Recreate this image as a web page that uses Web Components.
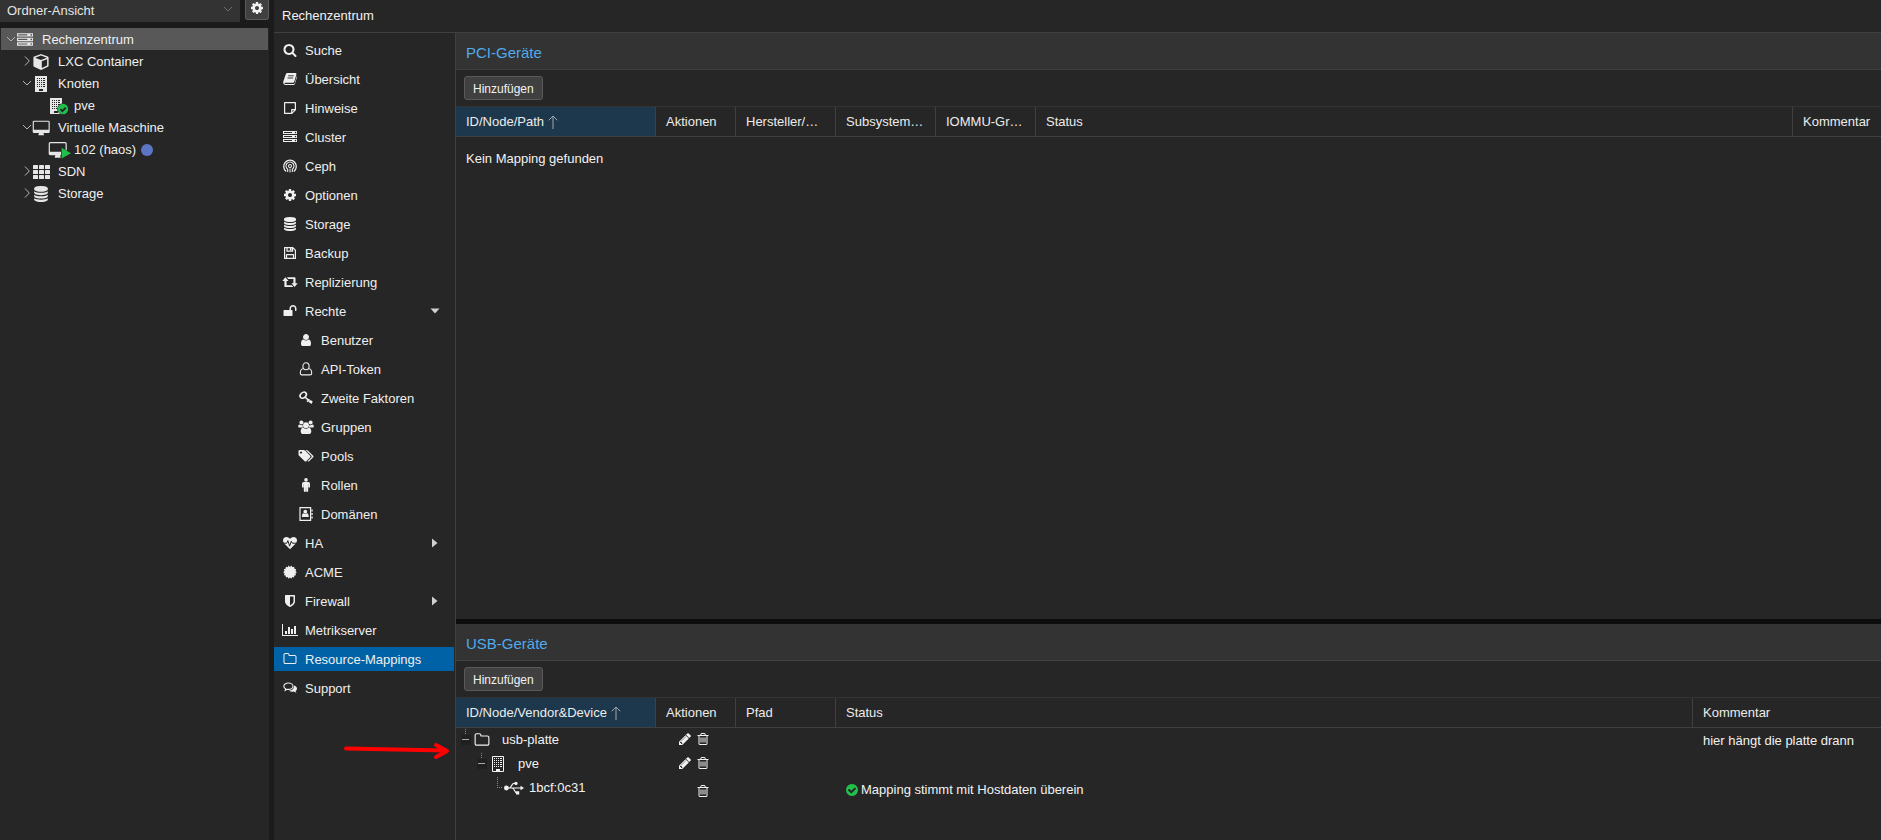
<!DOCTYPE html>
<html lang="de">
<head>
<meta charset="utf-8">
<title>Rechenzentrum</title>
<style>
html, body { margin: 0; height: 100%; background: #262626; }
body { color: #f2f2f2; font: 13px/16px "Liberation Sans", Arial, sans-serif; overflow: hidden; }
</style>
</head>
<body>
<dc-app></dc-app>
<script>
const P = d => `<path d="${d}"/>`;
/* Icons: [viewBox, markup] */
const BUILDING = `<path fill-rule="evenodd" d="M1 0h12v16H1zM3 2v1h1V2zm2 0v1h1V2zm2 0v1h1V2zm2 0v1h1V2zM3 4v1h1V4zm2 0v1h1V4zm2 0v1h1V4zm2 0v1h1V4zM3 6v1h1V6zm2 0v1h1V6zm2 0v1h1V6zm2 0v1h1V6zM3 8v1h1V8zm2 0v1h1V8zm2 0v1h1V8zm2 0v1h1V8zM3 10v1h1v-1zm2 0v1h1v-1zm2 0v1h1v-1zm2 0v1h1v-1zM11 2v1h-1V2zM11 4v1h-1V4zM11 6v1h-1V6zM11 8v1h-1V8zM11 10v1h-1v-1zM5 13v2h4v-2z"/>`;
const DESKTOP = P("M1728 992v-832q0-13-9.5-22.5t-22.5-9.5h-1600q-13 0-22.5 9.5t-9.5 22.5v832q0 13 9.5 22.5t22.5 9.5h1600q13 0 22.5-9.5t9.5-22.5zm128-832v1088q0 66-47 113t-113 47h-544q0 37 16 77.5t32 71 16 43.5q0 26-19 45t-45 19h-512q-26 0-45-19t-19-45q0-14 16-44t32-70 16-78h-544q-66 0-113-47t-47-113v-1088q0-66 47-113t113-47h1600q66 0 113 47t47 113z");
const ICONS = {
search: ["0 0 1792 1792", P("M1216 832q0-185-131.5-316.5t-316.5-131.5-316.5 131.5-131.5 316.5 131.5 316.5 316.5 131.5 316.5-131.5 131.5-316.5zm512 832q0 52-38 90t-90 38q-54 0-90-38l-343-342q-179 124-399 124-143 0-273.5-55.5t-225-150-150-225-55.5-273.5 55.5-273.5 150-225 225-150 273.5-55.5 273.5 55.5 225 150 150 225 55.5 273.5q0 220-124 399l343 343q37 37 37 90z")],
cog: ["0 0 1792 1792", P("M1152 896q0-106-75-181t-181-75-181 75-75 181 75 181 181 75 181-75 75-181zm512-109v222q0 12-8 23t-20 13l-185 28q-19 54-39 91 35 50 107 138 10 12 10 25t-9 23q-27 37-99 108t-94 71q-12 0-26-9l-138-108q-44 23-91 38-16 136-29 186-7 28-36 28h-222q-14 0-24.5-8.5t-11.5-21.5l-28-184q-49-16-90-37l-141 107q-10 9-25 9-14 0-25-11-126-114-165-168-7-10-7-23 0-12 8-23 15-21 51-66.5t54-70.5q-27-50-41-99l-183-27q-13-2-21-12.5t-8-23.5v-222q0-12 8-23t19-13l186-28q14-46 39-92-40-57-107-138-10-12-10-24 0-10 9-23 26-36 98.5-107.5t94.5-71.5q13 0 26 10l138 107q44-23 91-38 16-136 29-186 7-28 36-28h222q14 0 24.5 8.5t11.5 21.5l28 184q49 16 90 37l142-107q9-9 24-9 13 0 25 10 129 119 165 170 7 8 7 22 0 12-8 23-15 21-51 66.5t-54 70.5q26 50 41 98l183 28q13 2 21 12.5t8 23.5z")],
database: ["0 0 1792 1792", P("M896 768q237 0 443-43t325-127v170q0 69-103 128t-280 93.5-385 34.5-385-34.5-280-93.5-103-128v-170q119 84 325 127t443 43zm0 768q237 0 443-43t325-127v170q0 69-103 128t-280 93.5-385 34.5-385-34.5-280-93.5-103-128v-170q119 84 325 127t443 43zm0-384q237 0 443-43t325-127v170q0 69-103 128t-280 93.5-385 34.5-385-34.5-280-93.5-103-128v-170q119 84 325 127t443 43zm0-1152q208 0 385 34.5t280 93.5 103 128v128q0 69-103 128t-280 93.5-385 34.5-385-34.5-280-93.5-103-128v-128q0-69 103-128t280-93.5 385-34.5z")],
server: ["0 0 1792 1792", P("M128 1408h1024v-128h-1024v128zm0-512h1024v-128h-1024v128zm1568 448q0-40-28-68t-68-28-68 28-28 68 28 68 68 28 68-28 28-68zm-1568-960h1024v-128h-1024v128zm1568 448q0-40-28-68t-68-28-68 28-28 68 28 68 68 28 68-28 28-68zm0-512q0-40-28-68t-68-28-68 28-28 68 28 68 68 28 68-28 28-68zm96 832v384h-1792v-384h1792zm0-512v384h-1792v-384h1792zm0-512v384h-1792v-384h1792z")],
pencil: ["128 128 1536 1536", P("M491 1536l91-91-235-235-91 91v107h128v128h107zm523-928q0-22-22-22-10 0-17 7l-542 542q-7 7-7 17 0 22 22 22 10 0 17-7l542-542q7-7 7-17zm-54-192l416 416-832 832h-416v-416zm683 96q0 53-37 90l-166 166-416-416 166-165q36-38 90-38 53 0 91 38l235 234q37 39 37 91z")],
trash: ["0 0 1792 1792", P("M704 736v576q0 14-9 23t-23 9h-64q-14 0-23-9t-9-23v-576q0-14 9-23t23-9h64q14 0 23 9t9 23zm256 0v576q0 14-9 23t-23 9h-64q-14 0-23-9t-9-23v-576q0-14 9-23t23-9h64q14 0 23 9t9 23zm256 0v576q0 14-9 23t-23 9h-64q-14 0-23-9t-9-23v-576q0-14 9-23t23-9h64q14 0 23 9t9 23zm128 724v-948h-896v948q0 22 7 40.5t14.5 27 10.5 8.5h832q3 0 10.5-8.5t14.5-27 7-40.5zm-672-1076h448l-48-117q-7-9-17-11h-317q-10 2-17 11zm928 32v64q0 14-9 23t-23 9h-96v948q0 83-47 143.5t-113 60.5h-832q-66 0-113-58.5t-47-141.5v-952h-96q-14 0-23-9t-9-23v-64q0-14 9-23t23-9h309l70-167q15-37 54-63t79-26h320q40 0 79 26t54 63l70 167h309q14 0 23 9t9 23z")],
check: ["128 128 1536 1536", P("M1412 734q0-28-18-46l-91-90q-19-19-45-19t-45 19l-408 407-226-226q-19-19-45-19t-45 19l-91 90q-18 18-18 46 0 27 18 45l362 362q19 19 45 19 27 0 46-19l543-543q18-18 18-45zm252 162q0 209-103 385.5t-279.5 279.5-385.5 103-385.5-103-279.5-279.5-103-385.5 103-385.5 279.5-279.5 385.5-103 385.5 103 279.5 279.5 103 385.5z")],
user: ["0 0 1792 1792", P("M1536 1399q0 109-62.5 187t-150.5 78h-854q-88 0-150.5-78t-62.5-187q0-85 8.5-160.5t31.5-152 58.5-131 94-89 134.5-34.5q131 128 313 128t313-128q76 0 134.5 34.5t94 89 58.5 131 31.5 152 8.5 160.5zm-256-887q0 159-112.5 271.5t-271.5 112.5-271.5-112.5-112.5-271.5 112.5-271.5 271.5-112.5 271.5 112.5 112.5 271.5z")],
folder: ["0 0 1792 1792", P("M1600 1312v-704q0-40-28-68t-68-28h-704q-40 0-68-28t-28-68v-64q0-40-28-68t-68-28h-320q-40 0-68 28t-28 68v960q0 40 28 68t68 28h1216q40 0 68-28t28-68zm128-704v704q0 92-66 158t-158 66h-1216q-92 0-158-66t-66-158v-960q0-92 66-158t158-66h320q92 0 158 66t66 158v32h672q92 0 158 66t66 158z")],
unlock: ["0 0 1792 1792", P("M1728 576v256q0 26-19 45t-45 19h-64q-26 0-45-19t-19-45v-256q0-106-75-181t-181-75-181 75-75 181v192h96q40 0 68 28t28 68v576q0 40-28 68t-68 28h-960q-40 0-68-28t-28-68v-576q0-40 28-68t68-28h672v-192q0-185 131.5-316.5t316.5-131.5 316.5 131.5 131.5 316.5z")],
shield: ["0 0 1792 1792", P("M1344 960v-640h-448v1137q119-63 213-137 235-184 235-360zm192-768v768q0 86-33.5 170.5t-83 150-118 127.5-126.5 103-121 77.5-89.5 49.5-42.5 20q-12 6-26 6t-26-6q-16-7-42.5-20t-89.5-49.5-121-77.5-126.5-103-118-127.5-83-150-33.5-170.5v-768q0-26 19-45t45-19h1152q26 0 45 19t19 45z")],
cube: ["0 0 16 16", `<path fill-rule="evenodd" d="M7.5 0.2Q8 0 8.5.2L14.9 2.6Q15.6 2.9 15.6 3.7V11.7Q15.6 12.4 15 12.7L8.6 15.8Q8 16.1 7.4 15.8L1 12.7Q.4 12.4.4 11.7V3.7Q.4 2.9 1.1 2.6ZM8 1.6 2.1 3.7 8 5.9 13.9 3.7ZM8.8 14 14.1 11.4V5.2L8.8 7.2Z"/>`],
building: ["0 0 14 16", BUILDING],
node: ["0 0 20 18", BUILDING + `<circle cx="14" cy="11" r="5.8" fill="#262626"/><circle cx="14" cy="11" r="5.2" fill="#21bf4b"/><path d="m11.4 11.2 2 2 3.4-3.6" fill="none" stroke="#262626" stroke-width="1.8"/>`],
buildingo: ["0 0 14 16", `<path fill="none" stroke="currentColor" d="M1.5.5h11v15h-11z"/><path d="M3 2h1v1H3zm2 0h1v1H5zm2 0h1v1H7zm2 0h2v1H9zM3 4h1v1H3zm2 0h1v1H5zm2 0h1v1H7zm2 0h2v1H9zM3 6h1v1H3zm2 0h1v1H5zm2 0h1v1H7zm2 0h2v1H9zM3 8h1v1H3zm2 0h1v1H5zm2 0h1v1H7zm2 0h2v1H9zM3 10h1v1H3zm2 0h1v1H5zm2 0h1v1H7zm2 0h2v1H9zM5 13h4v2.5H5z"/>`],
desktop: ["-32 0 1920 1664", DESKTOP],
vm: ["0 0 22 17", `<g transform="translate(.3 0) scale(.0094)">${DESKTOP}</g><path d="M12 5l10 6.200L12 17z" fill="#262626"/><path d="M12.600 5.800 22 11.200 12.600 16.600z" fill="#21bf4b"/>`],
th: ["0 0 17 14", [0, 5, 10].map(y => [0, 6, 12].map(x => `<rect x="${x}" y="${y}" width="5" height="4" rx=".6"/>`).join("")).join("")],
book: ["0 0 14 14", `<path d="M4.500 1H12.600Q13.700 1.300 13.400 2.400L11.200 9.800Q10.900 10.700 10 10.700H2.200Q1.400 10.900 1.600 11.500 1.800 12 2.600 12H10.800Q11.500 12 11.700 11.300L13.800 4.100Q14.200 4.700 13.900 5.500L11.900 12Q11.500 13 10.600 13H2.500Q.7 12.900.3 11.200 0 10.300.4 9.300L2.800 2.300Q3.300 1 4.500 1z"/><path d="M5.200 3.800h5.600M4.500 6h5.600" stroke="#262626" stroke-width=".9"/>`],
note: ["0 0 14 14", `<path d="M1.600 1.600h10.800v7.200l-3.600 3.600H1.600zM12.400 8.700H8.700v3.700" fill="none" stroke="currentColor" stroke-width="1.200" stroke-linejoin="round"/>`],
ceph: ["0 0 14 14", `<g fill="none" stroke="currentColor" stroke-width="1.300"><path d="M3.200 12.500A6.300 6.300 0 1 1 10.800 12.500"/><path d="M4.700 13V10.300A4 4 0 1 1 9.300 10.300V13" stroke-width="1.100"/><circle cx="7" cy="7" r="1.500" stroke-width="1.100"/><path d="M7 9.500v4" stroke-width="1"/></g>`],
floppy: ["0 0 14 14", `<path d="M1.600 1.600h8.200l2.600 2.600v8.200H1.600z M3.500 12.400V8.600h7v3.800M4 1.600v3.600h5.600V1.600" fill="none" stroke="currentColor" stroke-width="1.200" stroke-linejoin="round"/><path d="M6.900 2h1.700v2.600H6.900z"/>`],
retweet: ["0 0 16 14", P("M3.400 2.200 6.500 6H4.600v4.200h5.200l1.500 1.900H3.300Q2.400 12.100 2.400 11.200V6H.3zM4.800 2.200h7.800q.9 0 .9.9V8.200h2.200L12.600 12 9.400 8.200h2V4.100H6.300z")],
usero: ["0 0 14 14", `<path d="M4 6.800C2 7 1.300 8.700 1.300 11.200q0 1.700 1.700 1.700h8q1.700 0 1.700-1.700C12.700 8.700 12 7 10 6.800" fill="none" stroke="currentColor" stroke-width="1.100"/><ellipse cx="7" cy="4.300" rx="3.100" ry="3.500" fill="none" stroke="currentColor" stroke-width="1.100"/>`],
key: ["0 0 14 14", `<ellipse cx="4.200" cy="4.200" rx="3.500" ry="2.600" transform="rotate(-42 4.200 4.200)" fill="none" stroke="currentColor" stroke-width="1.600"/><path d="m6 6 6.800 6.300M8 10.700l2.400-2.400M10.300 11.400l1.400-1.400M11.300 9.600l2 1.800" fill="none" stroke="currentColor" stroke-width="1.600"/>`],
users: ["0 0 16 14", `<circle cx="3.400" cy="2.500" r="2"/><circle cx="12.600" cy="2.500" r="2"/><path d="M1.300 4.500Q3 5.600 4.700 4.900 4.500 6.600 5.500 7.600H1.800Q.2 7.600.2 6.400.2 4.500 1.300 4.500zM14.700 4.500Q13 5.600 11.300 4.900 11.500 6.600 10.500 7.600h3.700q1.600 0 1.600-1.200Q15.800 4.500 14.700 4.500z"/><circle cx="8" cy="5.200" r="2.900"/><path d="M5.300 7.800Q8 9.800 10.700 7.800 13.300 8 13.300 11.800 13.200 13.800 11.600 13.900H4.400Q2.800 13.800 2.700 11.800 2.700 8 5.300 7.800z"/>`],
tags: ["0 0 16 14", `<path fill-rule="evenodd" d="M.5 2Q.5 1 1.500 1H5.600Q6.600 1.100 7.300 1.800L12.200 6.700Q12.900 7.400 12.200 8.200L8.300 12.200Q7.500 12.900 6.700 12.200L1.600 7.200Q.6 6.300.5 5.400zM3 2.400a1.100 1.100 0 1 0 .01 0z"/><path d="M7.500 1h.9q.9.100 1.700.8L15.200 6.700q.7.700 0 1.500L11.100 12.300Q10.400 12.800 9.500 12.300L13.400 8.300Q14 7.500 13.400 6.700z"/>`],
male: ["0 0 14 14", `<circle cx="7" cy="1.900" r="1.800"/><path d="M4.700 4h4.600Q11 4.200 11 5.800V9q-.2.700-.8.700T9.400 9V6.200H9.200V13q-.3.900-1.100.9T7.100 13V9.400H6.900V13q-.2.900-1 .9T4.800 13V6.200H4.600V9q-.2.700-.8.700T3 9V5.800Q3 4.200 4.700 4z"/>`],
address: ["0 0 14 14", `<path d="M1 .7h10.600v12.600H1z" fill="none" stroke="currentColor" stroke-width="1.200"/><circle cx="6.300" cy="4.700" r="1.900"/><path d="M4.600 6.200Q6.300 7.400 8 6.200q1.700.2 1.700 3.800H2.900Q2.900 6.400 4.600 6.200zM12.400 2.500h1.300v2h-1.300zM12.400 6h1.300v2h-1.300zM12.400 9.500h1.300v2h-1.300z"/>`],
heartbeat: ["0 0 14 14", `<path d="M7 13.200 1.300 7.400Q0 5.900 0 4.500 0 1.100 3.700 1 5.300 1 7 2.800 8.700 1 10.300 1 14 1.100 14 4.500 14 5.900 12.700 7.400z"/><path d="M0 7.200h3.800l1.100-2.600 1.700 5.600 1.700-5 1 2H14" fill="none" stroke="#262626" stroke-width="1"/>`],
cert: ["0 0 14 14", P("M7 1.900 8.500.6 9.400 2.300 11.200 1.800 11.400 3.700 13.200 4.200 12.500 5.900 13.800 7.200 12.400 8.500 13.100 10.200 11.300 10.500 11 12.400 9.300 12 8.300 13.700 7 12.500 5.600 13.700 4.700 12 2.900 12.400 2.700 10.600.9 10.200 1.600 8.500.2 7.200 1.600 5.900.8 4.200 2.600 3.700 2.900 1.800 4.700 2.300 5.600.6z")],
chart: ["0 0 16 14", P("M0 1h1v11h15v1H0zM3 8h2v3H3zM6 4h2v7H6zM9 6h2v5H9zM12 3h2v8h-2z")],
comments: ["0 0 14 14", `<path d="M5.400 2C2.900 2 .8 3.400.8 5.200c0 1.100.8 2 1.900 2.600L2.200 9.300 4.200 8.300q.6.100 1.200.1C7.900 8.400 10 7 10 5.200S7.900 2 5.400 2z" fill="none" stroke="currentColor" stroke-width="1.100"/><path d="M11 4.600c1.800.5 3 1.700 3 3.100q0 1.400-1.400 2.400.2.900 1 1.700-1.600-.1-2.800-1.200-2.800.6-5-.8Q11.200 9.600 11 4.600z"/>`],
usb: ["0 0 20 14", `<circle cx="2.400" cy="7" r="2.400"/><path d="M2 7h15M5 7C8 7 7 2.400 10 2.400h2M8 7c3 0 2 4.800 5 4.800" fill="none" stroke="currentColor" stroke-width="1.200"/><circle cx="12" cy="2.400" r="1.600"/><path d="M12 10.200h3.200v3.200H12zM16.500 4.800 20 7l-3.500 2.200z"/>`],
down: ["0 0 10 10", `<path d="m1 3 4 4 4-4" fill="none" stroke="currentColor" stroke-width="1"/>`],
right: ["0 0 10 10", `<path d="m3 .5 4.300 4.500L3 9.500" fill="none" stroke="currentColor" stroke-width="1"/>`],
caretdown: ["0 0 10 10", P("M.5 2.500h9L5 7.500z")],
caretright: ["0 0 10 10", P("M2 .5v9L7.500 5z")],
sort: ["0 0 10 14", `<path d="M5 14V1M.7 5.300 5 1l4.300 4.300" fill="none" stroke="currentColor" stroke-width="1"/>`],
minus: ["0 0 16 24", `<path d="M7.500 1v6" stroke="#8a8a8a" stroke-dasharray="1 1" fill="none"/><path fill="#1f1f1f" d="M3 7h10v10H3z"/><path fill="#a8a8a8" d="M4 11h7v1H4z"/>`],
elbow: ["0 0 14 24", `<path d="M7.500 1v11M7 11.500h6" stroke="#8a8a8a" stroke-dasharray="1 1" fill="none"/>`]
};

/* Defines a custom element whose open shadow root holds the given styles and markup. */
function define(name, css, html) {
  customElements.define(name, class extends HTMLElement {
    constructor() {
      super();
      const markup = typeof html === "function" ? html(this) : html;
      const t = document.createElement("template");
      t.innerHTML = `<style>${css}</style>${markup}`;
      this.attachShadow({ mode: "open" }).append(t.content.cloneNode(true));
    }
  });
}

define("dc-icon", `:host{display:block;flex:none;width:14px;height:14px}svg{display:block;width:100%;height:100%;overflow:visible}`,
  el => { const i = ICONS[el.getAttribute("name")]; return `<svg viewBox="${i[0]}" fill="currentColor" aria-hidden="true">${i[1]}</svg>`; });

define("view-bar", `
  :host{display:grid;grid-template-columns:1fr 24px;gap:5px;height:28px;background:#1b1b1b;align-items:start}
  label{display:flex;align-items:center;height:22px;background:#333;padding-right:7px;color:#6e6e6e}
  select{appearance:none;flex:1;min-width:0;height:22px;margin:0;border:0;padding:0 0 1px 7px;background:none;color:#e4e4e4;font:inherit;outline:0}
  label dc-icon{width:10px;height:10px;margin-bottom:4px}
  button{height:20px;padding:0 0 4px;border:1px solid #5c5c5c;border-top:0;border-radius:0 0 3px 3px;background:#404040;color:#f2f2f2;display:flex;align-items:center;justify-content:center}
  button dc-icon{width:14px;height:14px}`,
  `<label><select aria-label="Ansicht"><option>Ordner-Ansicht</option></select><dc-icon name="down"></dc-icon></label>
   <button type="button" aria-label="Einstellungen"><dc-icon name="cog"></dc-icon></button>`);

define("tree-node", `
  :host{display:flex;align-items:center;height:22px;margin:0 1px;padding-left:calc(var(--depth,0)*16px);white-space:nowrap;color:#efefef}
  :host([selected]){background:#585858}
  .x{width:16px;display:flex;justify-content:flex-end;color:#b5b5b5}
  .x dc-icon{width:10px;height:10px;margin-right:1px}
  .i{width:16px;height:16px;display:flex;align-items:center;margin:2px 9px 0 0;color:#e6e6e6}
  .i dc-icon{width:16px;height:16px}
  .i dc-icon[name=th],.i dc-icon[name=desktop]{width:17px}
  .i dc-icon[name=node]{width:20px;height:18px;margin-top:2px}
  .i dc-icon[name=vm]{width:22px;height:17px}
  .t{display:flex;align-items:center;padding-top:2px}`,
  el => { const a = el.getAttribute("arrow"), n = el.getAttribute("icon");
    return `<span class="x">${a ? `<dc-icon name="${a}"></dc-icon>` : ""}</span><span class="i"><dc-icon name="${n}"></dc-icon></span><span class="t"><slot></slot></span>`; });

define("resource-tree", `
  :host{display:block;padding-bottom:8px}
  .tag{width:12px;height:12px;border-radius:50%;background:#5c76c4;margin-left:5px}
  .d1{--depth:1}.d2{--depth:2}`,
  `<tree-node role="treeitem" selected arrow="down" icon="server">Rechenzentrum</tree-node>
   <tree-node role="treeitem" class="d1" arrow="right" icon="cube">LXC Container</tree-node>
   <tree-node role="treeitem" class="d1" arrow="down" icon="building">Knoten</tree-node>
   <tree-node role="treeitem" class="d2" icon="node">pve</tree-node>
   <tree-node role="treeitem" class="d1" arrow="down" icon="desktop">Virtuelle Maschine</tree-node>
   <tree-node role="treeitem" class="d2" icon="vm">102 (haos)<span class="tag"></span></tree-node>
   <tree-node role="treeitem" class="d1" arrow="right" icon="th">SDN</tree-node>
   <tree-node role="treeitem" class="d1" arrow="right" icon="database">Storage</tree-node>`);

define("nav-item", `
  :host{display:block}
  a{display:flex;align-items:center;height:24px;padding:0 14px 0 8px;color:#efefef;text-decoration:none}
  :host([sub]) a{padding-left:24px}
  :host([active]) a{background:#0062a6}
  .i{width:16px;height:16px;margin-right:7px;display:flex;justify-content:center}
  .i dc-icon{margin-top:1px}
  .t{flex:1;padding-top:2px}
  dc-icon[name=users],dc-icon[name=tags],dc-icon[name=retweet],dc-icon[name=chart]{width:16px}
  .c{width:10px;height:10px;color:#d0d0d0}`,
  el => { const c = el.getAttribute("arrow");
    return `<a href="#"><span class="i"><dc-icon name="${el.getAttribute("icon")}"></dc-icon></span><span class="t"><slot></slot></span>${c ? `<dc-icon class="c" name="${c}"></dc-icon>` : ""}</a>`; });

const NAV = [["search","Suche"],["book","Übersicht"],["note","Hinweise"],["server","Cluster"],["ceph","Ceph"],["cog","Optionen"],["database","Storage"],["floppy","Backup"],["retweet","Replizierung"],["unlock","Rechte",'arrow="caretdown"'],
["user","Benutzer","sub"],["usero","API-Token","sub"],["key","Zweite Faktoren","sub"],["users","Gruppen","sub"],["tags","Pools","sub"],["male","Rollen","sub"],["address","Domänen","sub"],
["heartbeat","HA",'arrow="caretright"'],["cert","ACME"],["shield","Firewall",'arrow="caretright"'],["chart","Metrikserver"],["folder","Resource-Mappings","active"],["comments","Support"]];
define("side-nav", `:host{display:block;border-right:1px solid #404040;padding:5px 1px 0 0}nav{display:grid;gap:5px}`,
  `<nav aria-label="Rechenzentrum">${NAV.map(n => `<nav-item icon="${n[0]}" ${n[2] || ""}>${n[1]}</nav-item>`).join("")}</nav>`);

define("mapping-panel", `
  :host{display:flex;flex-direction:column;min-width:0}
  h2{margin:0;height:36px;line-height:40px;padding-left:10px;background:#333;border-bottom:1px solid #404040;color:#4fabec;font-size:15px;font-weight:400}
  .bar{height:36px;display:flex;align-items:center;padding-left:8px;border-bottom:1px solid #333}
  button{height:24px;padding:1px 8px 0;border:1px solid #5a5a5a;border-radius:3px;background:#404040;color:#f2f2f2;font:inherit;font-size:12px}`,
  `<h2><slot name="title"></slot></h2><div class="bar"><button type="button">Hinzufügen</button></div><slot></slot>`);

const GRID = `
  :host{display:block}
  table{width:100%;table-layout:fixed;border-collapse:separate;border-spacing:0}
  th,td{box-sizing:border-box;white-space:nowrap}
  th{height:30px;padding:0 0 0 10px;border-bottom:1px solid #404040;border-right:1px solid #404040;text-align:left;font-weight:400;color:#ececec}
  th:last-child{border-right:0}
  th.s{background:#1d384d}
  th.s span{display:flex;align-items:center;gap:4px}
  th.s dc-icon{width:10px;color:#a0a8ae}
  td{padding:0 0 0 10px}`;
define("pci-grid", GRID + `td{height:44px}.w200{width:200px}.w80{width:80px}.w100{width:100px}.w88{width:88px}`,
  `<table><thead><tr><th class="s w200" aria-sort="ascending"><span>ID/Node/Path<dc-icon name="sort"></dc-icon></span></th><th class="w80">Aktionen</th><th class="w100">Hersteller/…</th><th class="w100">Subsystem…</th><th class="w100">IOMMU-Gr…</th><th>Status</th><th class="w88">Kommentar</th></tr></thead>
   <tbody><tr><td colspan="7">Kein Mapping gefunden</td></tr></tbody></table>`);

const edit = `<button type="button" aria-label="Bearbeiten"><dc-icon class="p" name="pencil"></dc-icon></button>`;
const del = `<button type="button" aria-label="Entfernen"><dc-icon name="trash"></dc-icon></button>`;
define("usb-grid", GRID + `
  .w200{width:200px}.w80{width:80px}.w100{width:100px}.w188{width:188px}
  td{height:24px}
  .last td{height:26px}
  td.n{padding-left:2px;vertical-align:top}.n div,.st div{display:flex;align-items:center}
  .n .l2{padding-left:16px}.n .l3{padding-left:32px}
  .e{width:16px;height:24px}
  .l3 .e{width:14px}
  .ic{width:16px;height:16px;margin-right:12px}
  .l3 .u{width:20px;height:14px;margin-right:5px}
  .a{padding:0 26px 2px 0}.a div{display:flex;gap:4px;justify-content:flex-end}
  button{width:14px;height:14px;padding:0;border:0;background:none;color:#f2f2f2;display:flex;justify-content:center}
  .p{width:12px}
  .st div{gap:3px}.st dc-icon{width:12px;height:12px;color:#21bf4b}
  .last .a{padding:4px 26px 0 0}.last .st,.cm{padding-top:2px}`,
  `<table><thead><tr><th class="s w200" aria-sort="ascending"><span>ID/Node/Vendor&amp;Device<dc-icon name="sort"></dc-icon></span></th><th class="w80">Aktionen</th><th class="w100">Pfad</th><th>Status</th><th class="w188">Kommentar</th></tr></thead><tbody>
   <tr><td class="n"><div><dc-icon class="e" name="minus"></dc-icon><dc-icon class="ic" name="folder"></dc-icon>usb-platte</div></td><td class="a"><div>${edit}${del}</div></td><td></td><td></td><td class="cm">hier hängt die platte drann</td></tr>
   <tr><td class="n"><div class="l2"><dc-icon class="e" name="minus"></dc-icon><dc-icon class="ic" name="buildingo"></dc-icon>pve</div></td><td class="a"><div>${edit}${del}</div></td><td></td><td></td><td></td></tr>
   <tr class="last"><td class="n"><div class="l3"><dc-icon class="e" name="elbow"></dc-icon><dc-icon class="u" name="usb"></dc-icon>1bcf:0c31</div></td><td class="a"><div>${del}</div></td><td></td><td class="st"><div><dc-icon name="check"></dc-icon>Mapping stimmt mit Hostdaten überein</div></td><td></td></tr></tbody></table>`);

/* Red annotation arrow lying over the navigation. */
define("marker-arrow", `:host{position:absolute;left:342px;top:739px;pointer-events:none}svg{display:block}`,
  `<svg width="110" height="22" viewBox="0 0 110 22" fill="none" stroke="#f00" stroke-width="4" stroke-linecap="round" stroke-linejoin="round" aria-hidden="true"><path d="M4 9.500 104 11.500M94 6l11 6-11 6"/></svg>`);

define("dc-app", `
  :host{display:grid;grid-template-columns:269px minmax(0,1fr);column-gap:5px;min-height:100vh;background:#1b1b1b}
  aside{display:flex;flex-direction:column;background:#262626}
  main{display:grid;grid-template-rows:33px 1fr;background:#262626}
  h1{margin:0;box-sizing:border-box;padding:8px 0 0 8px;border-bottom:1px solid #404040;font-size:13px;font-weight:400;line-height:16px}
  .body{display:grid;grid-template-columns:182px minmax(0,1fr)}
  .panels{display:flex;flex-direction:column}
  .top{flex:1}
  .low{border-top:5px solid #0d0d0d;padding-bottom:38px}`,
  `<aside><view-bar></view-bar><resource-tree role="tree" aria-label="Ressourcen"></resource-tree></aside>
   <main><h1>Rechenzentrum</h1><div class="body"><side-nav></side-nav><div class="panels">
   <mapping-panel class="top"><span slot="title">PCI-Geräte</span><pci-grid></pci-grid></mapping-panel>
   <mapping-panel class="low"><span slot="title">USB-Geräte</span><usb-grid></usb-grid></mapping-panel>
   </div></div></main><marker-arrow></marker-arrow>`);
</script>
</body>
</html>
